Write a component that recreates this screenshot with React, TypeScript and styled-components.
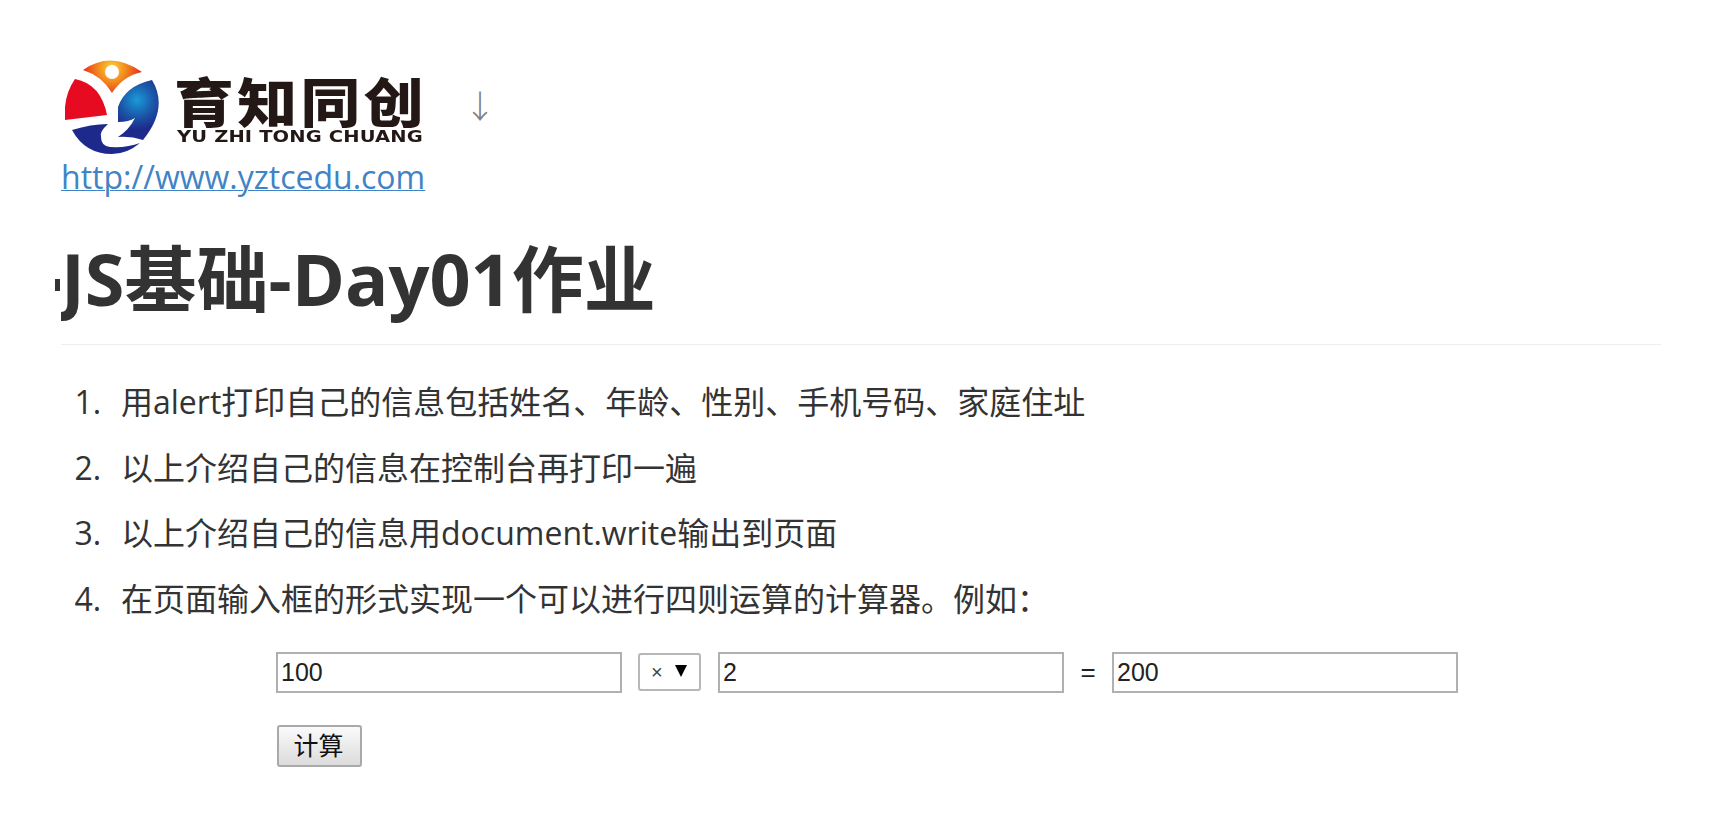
import React from "react";
import styled, { createGlobalStyle } from "styled-components";

const Global = createGlobalStyle`
  html, body { margin: 0; padding: 0; background: #fff; }
  body { font-family: "Open Sans", "Noto Sans CJK SC", sans-serif; color: #333; overflow: hidden; }
`;
const Page = styled.main`
  padding: 60px 49px 0 61px;
  height: 756px;
`;
const LogoRow = styled.div`
  display: flex;
  align-items: flex-start;
  height: 95px;
`;
const Emblem = styled.svg`
  width: 95px;
  height: 95px;
  margin-left: 4px;
  flex: none;
  filter: blur(0.5px);
`;
const Wordmark = styled.div`
  display: flex;
  flex-direction: column;
  margin-left: 17px;
  width: 246px;
  color: #231815;
  filter: blur(0.4px);
`;
const WordCn = styled.div`
  font-family: "Noto Sans CJK SC", sans-serif;
  font-weight: 900;
  font-size: 53px;
  line-height: 53px;
  height: 55px;
  margin: 14px 0 0 -3px;
  letter-spacing: 3px;
  white-space: nowrap;
  transform: scaleX(1.13);
  transform-origin: left center;
`;
const WordEn = styled.div`
  font-family: "DejaVu Sans", sans-serif;
  font-weight: 700;
  font-size: 15px;
  line-height: 16px;
  letter-spacing: 0.1px;
  white-space: nowrap;
  transform: scaleX(1.3);
  transform-origin: left center;
`;
const Arrow = styled.span`
  font-family: "Noto Sans CJK SC", sans-serif;
  font-weight: 300;
  font-size: 32px;
  line-height: 40px;
  color: #808080;
  margin: 24px 0 0 41px;
`;
const SiteLink = styled.a`
  display: block;
  width: max-content;
  font-size: 32px;
  line-height: 44px;
  color: #4183c4;
  text-decoration: underline;
  text-decoration-thickness: 1px;
`;
const Title = styled.h1`
  position: relative;
  margin: 39px 0 0;
  font-size: 72px;
  line-height: 80px;
  font-weight: 700;
  color: #333;
  padding-bottom: 26px;
  border-bottom: 1px solid #eee;
`;
const TitleText = styled.span`
  display: inline-block;
  clip-path: inset(-20px -20px -20px 0);
`;
const AnchorMark = styled.span`
  position: absolute;
  left: -6px;
  top: 41px;
  width: 5px;
  height: 12px;
  background: #333;
`;
const Steps = styled.ol`
  margin: 31px 0 0;
  padding: 0 0 0 60px;
  font-size: 32px;
  line-height: 51px;
  color: #333;
`;
const Step = styled.li`
  margin-bottom: 14.5px;
  &::marker {
    content: counter(list-item) ".  \\200a";
  }
`;
const CalcRow = styled.div`
  display: flex;
  align-items: center;
  margin: 28px 0 0 155px;
`;
const NumField = styled.input`
  box-sizing: border-box;
  width: 346px;
  height: 41px;
  border: 2px solid #b0b0b0;
  padding: 0 3px;
  font-family: "Liberation Sans", sans-serif;
  font-size: 25px;
  color: #222;
  background: #fff;
  outline: none;
`;
const OpSelect = styled.div`
  box-sizing: border-box;
  width: 63px;
  height: 38px;
  margin: 0 17px 0 16px;
  border: 2px solid #b7b7b7;
  border-radius: 3px;
  display: flex;
  align-items: center;
  justify-content: space-between;
  padding: 0 12px 0 11px;
  font-family: "Liberation Sans", sans-serif;
  font-size: 20px;
  color: #444;
`;
const Caret = styled.span`
  width: 0;
  height: 0;
  border-left: 6px solid transparent;
  border-right: 6px solid transparent;
  border-top: 12px solid #000;
  margin-top: -2px;
`;
const Equals = styled.span`
  width: 48px;
  text-align: center;
  font-family: "Liberation Sans", sans-serif;
  font-size: 26px;
  line-height: 36px;
  color: #222;
`;
const CalcButton = styled.button`
  display: block;
  box-sizing: border-box;
  width: 85px;
  height: 42px;
  margin: 32px 0 0 156px;
  padding: 0 2px 3px 0;
  border: 2px solid #a9a9a9;
  border-radius: 3px;
  background: linear-gradient(#fafafa, #dcdcdc);
  font-family: "Noto Sans CJK SC", sans-serif;
  font-size: 25px;
  line-height: 1;
  color: #111;
`;

const items = [
  "用alert打印自己的信息包括姓名、年龄、性别、手机号码、家庭住址",
  "以上介绍自己的信息在控制台再打印一遍",
  "以上介绍自己的信息用document.write输出到页面",
];

export default function App() {
  return (
    <Page>
      <Global />
      <LogoRow>
        <Emblem viewBox="0 0 95 95">
          <defs>
            <radialGradient id="sun" gradientUnits="userSpaceOnUse" cx="47" cy="8" r="28">
              <stop offset="0" stopColor="#fcd23a" />
              <stop offset="0.5" stopColor="#f28a1e" />
              <stop offset="1" stopColor="#e8341c" />
            </radialGradient>
            <radialGradient id="sea" gradientUnits="userSpaceOnUse" cx="72" cy="40" r="30">
              <stop offset="0" stopColor="#1a9ad8" />
              <stop offset="0.55" stopColor="#1b58a8" />
              <stop offset="1" stopColor="#1d2a8c" />
            </radialGradient>
          </defs>
          <path d="M18 10 Q46 -10 77 12 Q58 16 47 33 Q37 16 18 10Z" fill="url(#sun)" />
          <circle cx="47" cy="12" r="7" fill="#fff" />
          <path d="M10 19 Q36 24 42 55 L0 60 Q-2 36 10 19Z" fill="#e60b20" />
          <path d="M87 20 Q60 26 53 47 L53 62 Q64 62 70 58 Q64 70 53 77 Q66 76 78 80 Q104 48 87 20Z" fill="url(#sea)" />
          <path d="M7 70 Q26 64 43 64 Q34 72 36 77 Q36 86 45 87 Q62 88 75 83 Q62 94 47 94 Q20 94 7 70Z" fill="#1d2a8c" />
        </Emblem>
        <Wordmark>
          <WordCn>育知同创</WordCn>
          <WordEn>YU ZHI TONG CHUANG</WordEn>
        </Wordmark>
        <Arrow>↓</Arrow>
      </LogoRow>
      <SiteLink href="#">http://www.yztcedu.com</SiteLink>
      <Title>
        <AnchorMark />
        <TitleText>JS基础-Day01作业</TitleText>
      </Title>
      <Steps>
        {items.map((t) => (
          <Step key={t}>{t}</Step>
        ))}
        <Step>
          在页面输入框的形式实现一个可以进行四则运算的计算器。例如：
          <CalcRow>
            <NumField readOnly value="100" />
            <OpSelect>
              ×<Caret />
            </OpSelect>
            <NumField readOnly value="2" />
            <Equals>=</Equals>
            <NumField readOnly value="200" />
          </CalcRow>
          <CalcButton>计算</CalcButton>
        </Step>
      </Steps>
    </Page>
  );
}
